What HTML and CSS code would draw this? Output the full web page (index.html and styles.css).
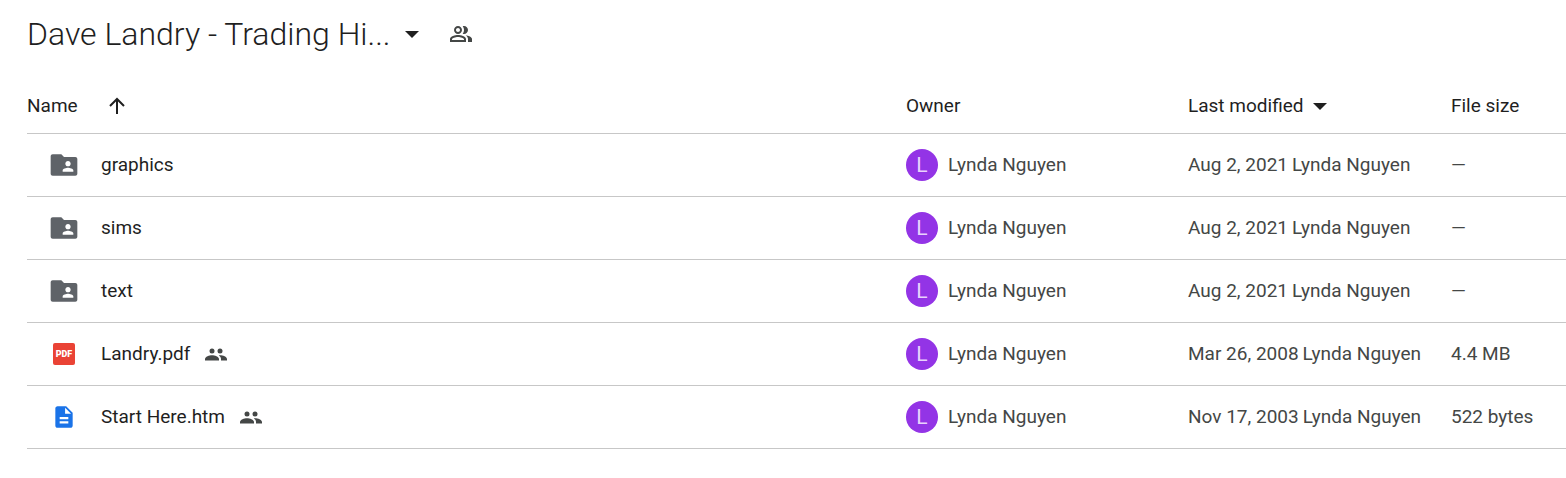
FILE: index.html
```html
<!DOCTYPE html>
<html lang="en">
<head>
    <meta charset="UTF-8">
    <meta name="viewport" content="width=device-width, initial-scale=1.0">
    <title>Dave Landry - Drive</title>
    <link rel="stylesheet" href="styles.css">
</head>
<body>
    <!-- shared icons -->
    <svg class="sprite" aria-hidden="true">
        <symbol id="folder" viewBox="0 0 24 24">
            <path d="M20.500 6H12l-2-2H3.500C2.700 4 2 4.700 2 5.500v13c0 .8.7 1.500 1.500 1.500h17c.8 0 1.500-.7 1.500-1.500v-11c0-.8-.7-1.500-1.500-1.500zM15 9c1.100 0 2 .9 2 2s-.9 2-2 2-2-.9-2-2 .9-2 2-2zm4 8h-8v-1c0-1.330 2.670-2 4-2s4 .67 4 2v1z"/>
        </symbol>
        <symbol id="doc" viewBox="0 0 24 24">
            <path d="M14 2H6c-1.1 0-1.99.9-1.99 2L4 20c0 1.1.89 2 1.99 2H18c1.1 0 2-.9 2-2V8l-6-6zm2 16H8v-2h8v2zm0-4H8v-2h8v2zm-3-5V3.5L18.5 9H13z"/>
        </symbol>
        <symbol id="people" viewBox="0 0 22 13">
            <circle cx="7" cy="3" r="2.5"/>
            <circle cx="15" cy="3" r="2.5"/>
            <path d="M0 12.500v-1.500C0 8.700 4.400 7.300 7 7.300s7 1.400 7 3.700v1.500z"/>
            <path d="M13.800 7.400c3.200-.4 8.200 1.200 8.200 3.600v1.500h-6V11c0-1.500-.8-2.700-2.200-3.600z"/>
        </symbol>
        <symbol id="caret" viewBox="0 0 14 7">
            <path d="M0 0h14L7 7z"/>
        </symbol>
    </svg>

    <header class="title-bar">
        <h1><button class="title-button">Dave Landry - Trading Hi... <svg class="caret"><use href="#caret"/></svg></button></h1>
        <button class="share-button" aria-label="Manage access">
            <svg class="share-icon" viewBox="0 0 24 24">
                <path d="M16.67 13.13C18.04 14.06 19 15.32 19 17v3h4v-3c0-2.18-3.57-3.47-6.33-3.87zM15 12c2.21 0 4-1.79 4-4s-1.79-4-4-4c-.47 0-.91.1-1.33.24C14.5 5.27 15 6.58 15 8s-.5 2.73-1.33 3.76c.42.14.86.24 1.33.24zM9 12c2.21 0 4-1.79 4-4s-1.79-4-4-4-4 1.79-4 4 1.790 4 4 4zm0-6c1.100 0 2 .9 2 2s-.9 2-2 2-2-.9-2-2 .9-2 2-2zM9 13c-2.670 0-8 1.340-8 4v3h16v-3c0-2.660-5.330-4-8-4zm6 5H3v-.99C3.200 16.290 6.300 15 9 15s5.800 1.290 6 2v1z"/>
            </svg>
        </button>
    </header>

    <table class="files">
        <colgroup>
            <col>
            <col class="col-owner">
            <col class="col-modified">
            <col class="col-size">
        </colgroup>
        <thead>
            <tr>
                <th scope="col">
                    <div class="name-head">
                        <button class="sort-button">Name</button>
                        <button class="sort-button" aria-label="Sort ascending">
                            <svg class="arrow" viewBox="0 0 18 18"><path d="M9 17V2M2 9l7-7 7 7"/></svg>
                        </button>
                    </div>
                </th>
                <th scope="col">Owner</th>
                <th scope="col"><button class="sort-button">Last modified <svg class="caret"><use href="#caret"/></svg></button></th>
                <th scope="col">File size</th>
            </tr>
        </thead>
        <tbody>
            <tr>
                <td><div class="file"><span class="type"><svg class="folder"><use href="#folder"/></svg></span>graphics</div></td>
                <td><div class="owner"><span class="avatar">L</span>Lynda Nguyen</div></td>
                <td><span class="date">Aug 2, 2021</span>Lynda Nguyen</td>
                <td>—</td>
            </tr>
            <tr>
                <td><div class="file"><span class="type"><svg class="folder"><use href="#folder"/></svg></span>sims</div></td>
                <td><div class="owner"><span class="avatar">L</span>Lynda Nguyen</div></td>
                <td><span class="date">Aug 2, 2021</span>Lynda Nguyen</td>
                <td>—</td>
            </tr>
            <tr>
                <td><div class="file"><span class="type"><svg class="folder"><use href="#folder"/></svg></span>text</div></td>
                <td><div class="owner"><span class="avatar">L</span>Lynda Nguyen</div></td>
                <td><span class="date">Aug 2, 2021</span>Lynda Nguyen</td>
                <td>—</td>
            </tr>
            <tr>
                <td><div class="file"><span class="type"><span class="pdf">PDF</span></span>Landry.pdf<svg class="people"><use href="#people"/></svg></div></td>
                <td><div class="owner"><span class="avatar">L</span>Lynda Nguyen</div></td>
                <td><span class="date">Mar 26, 2008</span>Lynda Nguyen</td>
                <td>4.4 MB</td>
            </tr>
            <tr>
                <td><div class="file"><span class="type"><svg class="doc"><use href="#doc"/></svg></span>Start Here.htm<svg class="people"><use href="#people"/></svg></div></td>
                <td><div class="owner"><span class="avatar">L</span>Lynda Nguyen</div></td>
                <td><span class="date">Nov 17, 2003</span>Lynda Nguyen</td>
                <td>522 bytes</td>
            </tr>
        </tbody>
    </table>
</body>
</html>
```
FILE: styles.css
```css
* {
    box-sizing: border-box;
}

body {
    margin: 0;
    padding-left: 27px;
    background: #fff;
    color: #1f1f1f;
    font-family: "Google Sans", Roboto, Arial, sans-serif;
    font-size: 19px;
    line-height: 26px;
}

svg {
    display: block;
    flex: none;
    fill: currentColor;
}

button {
    padding: 0;
    border: none;
    background: none;
    color: inherit;
    font: inherit;
    cursor: pointer;
}

.sprite {
    display: none;
}

.title-bar {
    display: flex;
    align-items: center;
    gap: 30px;
    height: 68px;
}

h1 {
    margin: 0;
    font-size: 32px;
    line-height: 38px;
    font-weight: 300;
}

.title-button {
    display: flex;
    align-items: center;
    gap: 15px;
}

.caret {
    width: 14px;
    height: 7px;
}

.share-button {
    color: #444746;
}

.share-icon {
    width: 24px;
    height: 24px;
}

.files {
    width: 100%;
    margin-top: 11px;
    border-collapse: collapse;
    table-layout: fixed;
}

.col-owner {
    width: 282px;
}

.col-modified {
    width: 263px;
}

.col-size {
    width: 115px;
}

th,
td {
    padding: 1px 0 0;
    border-bottom: 1px solid #c7c7c7;
    text-align: left;
    white-space: nowrap;
}

th {
    height: 54px;
    font-weight: 400;
}

td {
    height: 63px;
    color: #444746;
}

.name-head {
    display: flex;
    align-items: center;
    gap: 30px;
}

.sort-button {
    display: flex;
    align-items: center;
    gap: 10px;
}

.arrow {
    width: 18px;
    height: 18px;
    fill: none;
    stroke: currentColor;
    stroke-width: 2;
}

.file {
    display: flex;
    align-items: center;
    padding-left: 21px;
    color: #1f1f1f;
}

.type {
    display: flex;
    align-items: center;
    justify-content: center;
    width: 32px;
    height: 32px;
    margin-right: 21px;
}

.folder {
    width: 32px;
    height: 32px;
    color: #5f6368;
}

.doc {
    width: 26px;
    height: 26px;
    color: #1a73e8;
}

.pdf {
    width: 22px;
    height: 22px;
    border-radius: 2px;
    background: #ea4335;
    color: #fff;
    font-size: 9px;
    line-height: 22px;
    font-weight: 900;
    text-align: center;
}

.people {
    width: 22px;
    height: 13px;
    margin-left: 15px;
    color: #444746;
}

.owner {
    display: flex;
    align-items: center;
    gap: 10px;
}

.avatar {
    width: 32px;
    height: 32px;
    border-radius: 50%;
    background: #9334e6;
    color: #e9d2fd;
    font-size: 21px;
    line-height: 32px;
    text-align: center;
}

.date {
    margin-right: 4px;
}
```
